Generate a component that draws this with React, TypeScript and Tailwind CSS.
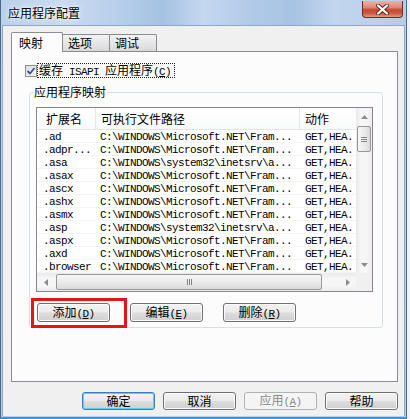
import React from "react";

const MS = "C:\\WINDOWS\\Microsoft.NET\\Fram...";
const SYS = "C:\\WINDOWS\\system32\\inetsrv\\a...";

const rows: [string, string][] = [
  [".ad", MS],
  [".adpr...", MS],
  [".asa", SYS],
  [".asax", MS],
  [".ascx", MS],
  [".ashx", MS],
  [".asmx", MS],
  [".asp", SYS],
  [".aspx", MS],
  [".axd", MS],
  [".browser", MS],
];

// ascii text in the dialog is half-width (6px), so it goes through a mono font
function Mono({ children }: { children: React.ReactNode }) {
  return (
    <span className="font-['Liberation_Mono',monospace] text-[11px] tracking-[-0.6px] whitespace-pre">
      {children}
    </span>
  );
}

function Arrow({ dir }: { dir: "up" | "down" | "left" | "right" }) {
  const vertical = dir === "up" || dir === "down";
  const pts = {
    up: "0,4 3.5,0 7,4",
    down: "0,0 3.5,4 7,0",
    left: "4,0 0,3.5 4,7",
    right: "0,0 4,3.5 0,7",
  }[dir];
  return (
    <svg width={vertical ? 7 : 4} height={vertical ? 4 : 7} viewBox={vertical ? "0 0 7 4" : "0 0 4 7"}>
      <polygon points={pts} fill="#8c8c8c" />
    </svg>
  );
}

function Button({
  children,
  variant = "normal",
  className = "",
}: {
  children: React.ReactNode;
  variant?: "normal" | "default" | "disabled";
  className?: string;
}) {
  const look =
    variant === "disabled"
      ? "border-[#adb2b5] bg-[#f4f4f4] text-[#8a8a8a]"
      : variant === "default"
        ? "border-[#3c7fb1] bg-[linear-gradient(180deg,#f2f2f2_0%,#ebebeb_48%,#dddddd_52%,#cfcfcf_100%)] shadow-[inset_0_0_0_1px_#62cdf3]"
        : "border-[#707070] bg-[linear-gradient(180deg,#f2f2f2_0%,#ebebeb_48%,#dddddd_52%,#cfcfcf_100%)] shadow-[inset_0_0_0_1px_#fbfbfb]";
  return (
    <div
      className={`w-[73px] flex items-center justify-center rounded-[3px] border leading-[14px] ${look} ${className}`}
    >
      <span>{children}</span>
    </div>
  );
}

function CloseButton() {
  return (
    <div className="ml-auto mt-[1px] mr-[3px] w-[41px] h-[17px] flex items-center justify-center rounded-b-[4px] border border-t-0 border-[#6b2d24] bg-[linear-gradient(180deg,#eab3a5_0%,#dc8a75_40%,#c5482f_55%,#cc5a40_78%,#e29d82_100%)]">
      <svg width="13" height="11" viewBox="0 0 13 11">
        <path d="M2 1.5 L11 9.5 M11 1.5 L2 9.5" stroke="#5a2219" strokeWidth="4" strokeLinecap="round" />
        <path d="M2 1.5 L11 9.5 M11 1.5 L2 9.5" stroke="#ffffff" strokeWidth="2.3" strokeLinecap="round" />
      </svg>
    </div>
  );
}

function ListView() {
  return (
    <div className="w-[337px] h-[185px] border border-[#828790] bg-white flex flex-col">
      <div className="flex h-[165px]">
        <div className="flex-1 flex flex-col">
          {/* header */}
          <div className="h-[22px] flex border-b border-[#e5e5e5] bg-[linear-gradient(180deg,#ffffff,#f9fafb)]">
            <div className="w-[59px] border-r border-[#e3e6ea] pl-[9px] pt-[4px]">扩展名</div>
            <div className="w-[204px] border-r border-[#e3e6ea] pl-[5px] pt-[4px]">可执行文件路径</div>
            <div className="flex-1 pl-[5px] pt-[4px]">动作</div>
          </div>
          {rows.map(([ext, path]) => (
            <div key={ext} className="h-[13px] flex items-center whitespace-nowrap border-b border-[#f4f4f4] leading-[12px]">
              <div className="w-[59px] pl-[6px] overflow-hidden">
                <Mono>{ext}</Mono>
              </div>
              <div className="w-[204px] pl-[4px] overflow-hidden">
                <Mono>{path}</Mono>
              </div>
              <div className="flex-1 pl-[5px] overflow-hidden">
                <Mono>GET,HEA.</Mono>
              </div>
            </div>
          ))}
        </div>
        {/* vertical scrollbar */}
        <div className="w-[16px] flex flex-col bg-[linear-gradient(90deg,#e9e9e9,#f6f6f6_30%,#f6f6f6_70%,#ececec)]">
          <div className="h-[17px] flex items-center justify-center">
            <Arrow dir="up" />
          </div>
          <div className="flex-1 pt-px">
            <div className="h-[26px] mx-px rounded-[2px] border border-[#979797] bg-[linear-gradient(90deg,#f7f7f7,#ebebeb_50%,#dadada)] flex flex-col items-center justify-center gap-[1px]">
              <div className="w-[6px] h-px bg-[#858585]" />
              <div className="w-[6px] h-px bg-[#858585]" />
              <div className="w-[6px] h-px bg-[#858585]" />
            </div>
          </div>
          <div className="h-[17px] flex items-center justify-center">
            <Arrow dir="down" />
          </div>
        </div>
      </div>
      {/* horizontal scrollbar */}
      <div className="flex h-[18px]">
        <div className="flex-1 flex bg-[linear-gradient(180deg,#e9e9e9,#f6f6f6_30%,#f6f6f6_70%,#ececec)]">
          <div className="w-[17px] flex items-center justify-center">
            <Arrow dir="left" />
          </div>
          <div className="flex-1 flex items-center pl-[2px]">
            <div className="w-[266px] h-[16px] rounded-[2px] border border-[#979797] bg-[linear-gradient(180deg,#f7f7f7,#ebebeb_50%,#dadada)] flex items-center justify-center gap-[1px]">
              <div className="w-px h-[6px] bg-[#858585]" />
              <div className="w-px h-[6px] bg-[#858585]" />
              <div className="w-px h-[6px] bg-[#858585]" />
            </div>
          </div>
          <div className="w-[17px] flex items-center justify-center">
            <Arrow dir="right" />
          </div>
        </div>
        <div className="w-[16px] bg-[#f0f0f0]" />
      </div>
    </div>
  );
}

export default function App() {
  return (
    <div className="w-[410px] h-[419px] overflow-hidden bg-[#eef3f9] text-[12px] leading-[14px] text-black font-['Noto_Sans_CJK_SC',sans-serif]">
      <div className="w-[407px] h-[419px] flex flex-col border-x border-[#4b6889] border-b-2 border-b-[#2f9bd9] pb-px bg-[linear-gradient(180deg,#c2d7ee,#b4cce8)]">
        {/* title bar */}
        <div className="h-[25px] shrink-0 flex items-start bg-[linear-gradient(90deg,#bad1eb_0%,#c8dbf0_15%,#b9d0ea_28%,#a5c2e4_40%,#c4d8ef_50%,#b2cae8_62%,#a7c3e5_72%,#c2d6ee_82%,#b5cde9_100%)]">
          <span className="mt-[6px] ml-[7px] [text-shadow:0_0_6px_#ffffff,0_0_3px_#ffffff]">应用程序配置</span>
          <CloseButton />
        </div>

        {/* client area */}
        <div className="flex-1 mx-px border-x border-t border-[#8ea6c4] bg-[#f0f0f0] flex flex-col pt-[6px] pl-[8px] pr-[6px]">
          {/* tabs */}
          <div className="flex items-end h-[19px]">
            <div className="relative z-10 -mb-px h-[20px] w-[52px] border border-b-0 border-[#898c95] rounded-t-[2px] bg-[#fcfcfc] pl-[7px] pt-[3px]">
              映射
            </div>
            <div className="-ml-px h-[17px] w-[48px] border border-b-0 border-[#898c95] rounded-t-[2px] bg-[linear-gradient(180deg,#f3f3f3,#e6e6e6_50%,#d9d9d9)] pl-[5px] pt-px">
              选项
            </div>
            <div className="-ml-px h-[17px] w-[48px] border border-b-0 border-[#898c95] rounded-t-[2px] bg-[linear-gradient(180deg,#f3f3f3,#e6e6e6_50%,#d9d9d9)] pl-[5px] pt-px">
              调试
            </div>
          </div>

          {/* tab page */}
          <div className="h-[331px] border border-[#898c95] bg-[#fcfcfc] pt-[11px] pl-[17px] pr-[14px]">
            <div className="-ml-[4px] h-[15px] flex items-center">
              <div className="w-[12px] h-[12px] border border-[#8e8f8f] bg-[linear-gradient(135deg,#dcdfe4,#f7f7f7)] flex items-center justify-center">
                <svg width="10" height="10" viewBox="0 0 10 10">
                  <path d="M1.5 5 L4 7.5 L8.5 2" fill="none" stroke="#3b4f8c" strokeWidth="1.8" />
                </svg>
              </div>
              <div className="h-[15px] border border-dotted border-[#222] pl-px pr-[3px] flex items-center">
                <span>
                  缓存<Mono> ISAPI </Mono>应用程序<Mono>(<u>C</u>)</Mono>
                </span>
              </div>
            </div>

            <fieldset className="mt-[7px] border border-[#d5dfe5] rounded-[3px] pl-[6px] pr-[9px] pt-[8px] pb-[5px]">
              <legend className="-ml-[3px] px-px leading-[14px]">应用程序映射</legend>
              <ListView />
              <div className="mt-[11px] pl-px flex gap-[20px]">
                <div className="relative">
                  <Button className="h-[19px]">
                    添加<Mono>(<u>D</u>)</Mono>
                  </Button>
                  <span className="absolute z-10 -left-[6px] -top-[5px] w-[96px] h-[30px] border-[3px] border-[#e3151a]" />
                </div>
                <Button className="h-[19px]">
                  编辑<Mono>(<u>E</u>)</Mono>
                </Button>
                <Button className="h-[19px]">
                  删除<Mono>(<u>R</u>)</Mono>
                </Button>
              </div>
            </fieldset>
          </div>

          {/* dialog buttons */}
          <div className="mt-[10px] flex justify-end gap-[8px]">
            <Button variant="default" className="h-[18px]">确定</Button>
            <Button className="h-[18px]">取消</Button>
            <Button variant="disabled" className="h-[18px]">
              应用<Mono>(<u>A</u>)</Mono>
            </Button>
            <Button className="h-[18px]">帮助</Button>
          </div>
        </div>
      </div>
    </div>
  );
}
